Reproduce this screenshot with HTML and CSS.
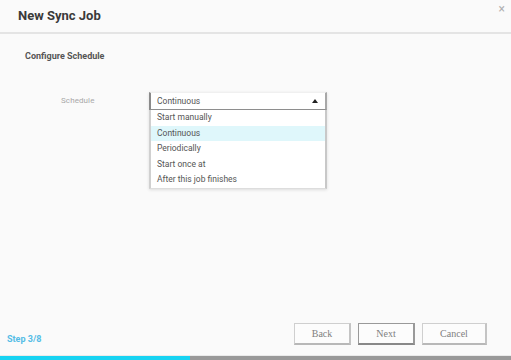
FILE: index.html
```html
<!DOCTYPE html>
<html lang="en">
<head>
    <meta charset="UTF-8">
    <title>New Sync Job</title>
    <link rel="stylesheet" href="styles.css">
</head>
<body>
    <div class="dialog">
        <div class="dlg-head">
            <h1>New Sync Job</h1>
            <span class="close">&times;</span>
        </div>

        <div class="dlg-body">
            <h2>Configure Schedule</h2>

            <div class="field">
                <label>Schedule</label>
                <div class="combo">
                    <div class="select">
                        <span>Continuous</span>
                        <span class="caret"></span>
                    </div>
                    <ul class="options">
                        <li>Start manually</li>
                        <li class="active">Continuous</li>
                        <li>Periodically</li>
                        <li>Start once at</li>
                        <li>After this job finishes</li>
                    </ul>
                </div>
            </div>
        </div>

        <div class="dlg-foot">
            <span class="step">Step 3/8</span>
            <div class="buttons">
                <button>Back</button>
                <button class="focus">Next</button>
                <button>Cancel</button>
            </div>
        </div>

        <div class="progress">
            <div class="progress-fill" style="width: 37.2%;"></div>
        </div>
    </div>
</body>
</html>
```

FILE: styles.css
```css
html, body {
    margin: 0;
    padding: 0;
    background-color: #fafafa;
    font-family: Roboto, "Liberation Sans", sans-serif;
}

.dialog {
    width: 511px;
    height: 360px;
    display: flex;
    flex-direction: column;
    background-color: #fafafa;
}

.dlg-head {
    height: 32px;
    border-bottom: 2px solid #e4e4e4;
    display: flex;
    justify-content: space-between;
    align-items: flex-start;
    box-sizing: content-box;
}

.dlg-head h1 {
    margin: 8px 0 0 18px;
    font-size: 13px;
    line-height: 16px;
    font-weight: bold;
    color: #3a3a3a;
}

.close {
    margin: 2px 6px 0 0;
    font-size: 12px;
    line-height: 14px;
    color: #b0b0b0;
}

.dlg-body {
    flex: 1;
    padding: 0 25px;
}

.dlg-body h2 {
    margin: 16px 0 0 0;
    font-size: 9px;
    line-height: 12px;
    font-weight: bold;
    color: #555;
}

.field {
    display: flex;
    margin-top: 30px;
}

.field label {
    width: 88px;
    padding: 4px 0 0 36px;
    box-sizing: border-box;
    font-size: 8px;
    color: #a8a8a8;
    letter-spacing: 0.1px;
}

.combo {
    width: 178px;
    margin-left: 36px;
    box-shadow: 0 1px 3px rgba(0, 0, 0, 0.12);
}

.select {
    height: 16px;
    border-left: 2px solid #8a8a8a;
    border-right: 2px solid #a8a8a8;
    border-top: 1px solid #f0f0f0;
    border-bottom: 1px solid #8e8e8e;
    background-color: #fff;
    display: flex;
    justify-content: space-between;
    align-items: center;
    padding: 0 7px 0 6px;
    font-size: 8.5px;
    color: #555;
}

.caret {
    width: 0;
    height: 0;
    border-left: 3px solid transparent;
    border-right: 3px solid transparent;
    border-bottom: 4px solid #222;
}

.options {
    list-style: none;
    margin: 0;
    padding: 0;
    background-color: #fff;
    border-left: 2px solid #d0d0d0;
    border-right: 2px solid #c8c8c8;
    border-bottom: 1px solid #ddd;
}

.options li {
    height: 15.6px;
    line-height: 15.6px;
    padding-left: 6px;
    font-size: 8.5px;
    color: #555;
}

.options li.active {
    background-color: #dff7fb;
}

.dlg-foot {
    display: flex;
    justify-content: space-between;
    align-items: flex-end;
    padding: 0 24px 10px 7px;
}

.step {
    font-size: 9px;
    font-weight: bold;
    color: #55bde6;
    line-height: 12px;
    margin-bottom: 0;
}

.buttons {
    display: flex;
    gap: 7px;
}

.buttons button {
    width: 57px;
    height: 22px;
    background-color: #fcfcfc;
    border: 1px solid #cfcfcf;
    border-bottom: 2px solid #b8b8b8;
    border-right: 2px solid #c4c4c4;
    font-family: "Liberation Serif", serif;
    font-size: 10px;
    color: #808080;
    padding: 0;
}

.buttons button.focus {
    border-color: #999;
    border-bottom-color: #888;
}

.buttons button:last-child {
    width: 65px;
}

.progress {
    height: 4px;
    background-color: #999;
    border-top: 1px solid #eaeaea;
}

.progress-fill {
    height: 100%;
    background-color: #17d3f2;
}
```
